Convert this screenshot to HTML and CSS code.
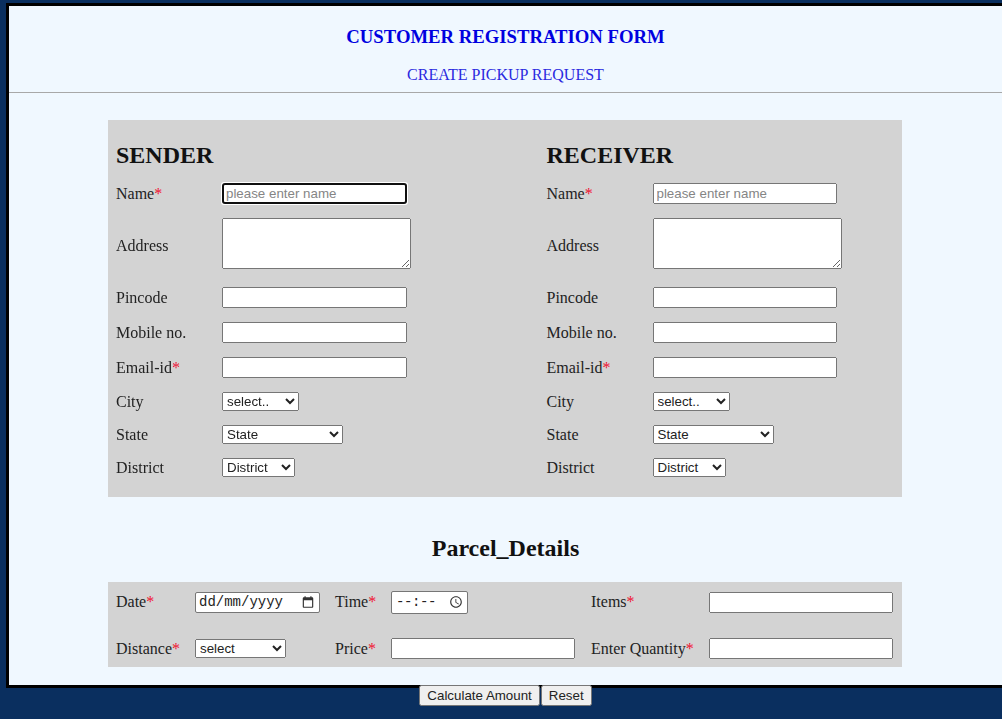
FILE: index.html
```html
<!DOCTYPE html>
<html lang="en">
<head>
    <meta charset="UTF-8">
    <meta name="viewport" content="width=device-width, initial-scale=1.0">
    <title>Customer Registration Form</title>
    <link rel="stylesheet" href="styles.css">
</head>
<body>

<form class="frame">
    <header class="page-head">
        <h3>CUSTOMER REGISTRATION FORM</h3>
        <p>CREATE PICKUP REQUEST</p>
    </header>
    <hr>

    <section class="panel parties">
        <div class="party">
            <h2>SENDER</h2>
            <label>Name<span class="req">*</span></label>
            <input class="text-in" type="text" placeholder="please enter name" autofocus>
            <label>Address</label>
            <textarea></textarea>
            <label>Pincode</label>
            <input class="text-in" type="text">
            <label>Mobile no.</label>
            <input class="text-in" type="text">
            <label>Email-id<span class="req">*</span></label>
            <input class="text-in" type="text">
            <label>City</label>
            <select class="city"><option>select..</option></select>
            <label>State</label>
            <select class="state"><option>State</option></select>
            <label>District</label>
            <select class="district"><option>District</option></select>
        </div>
        <div class="party">
            <h2>RECEIVER</h2>
            <label>Name<span class="req">*</span></label>
            <input class="text-in" type="text" placeholder="please enter name">
            <label>Address</label>
            <textarea></textarea>
            <label>Pincode</label>
            <input class="text-in" type="text">
            <label>Mobile no.</label>
            <input class="text-in" type="text">
            <label>Email-id<span class="req">*</span></label>
            <input class="text-in" type="text">
            <label>City</label>
            <select class="city"><option>select..</option></select>
            <label>State</label>
            <select class="state"><option>State</option></select>
            <label>District</label>
            <select class="district"><option>District</option></select>
        </div>
    </section>

    <h2 class="parcel-title">Parcel_Details</h2>

    <section class="panel parcel">
        <label>Date<span class="req">*</span></label>
        <div class="picker date-box">
            <input type="text" value="dd/mm/yyyy">
            <svg width="14" height="14" viewBox="0 0 24 24"><path d="M19 4h-1V2h-2v2H8V2H6v2H5c-1.100 0-2 .9-2 2v14c0 1.100.9 2 2 2h14c1.100 0 2-.9 2-2V6c0-1.100-.9-2-2-2zm0 16H5V9h14v11z"/></svg>
        </div>
        <label>Time<span class="req">*</span></label>
        <div class="picker time-box">
            <input type="text" value="--:--">
            <svg width="14" height="14" viewBox="0 0 24 24"><path d="M11.990 2C6.470 2 2 6.480 2 12s4.470 10 9.990 10C17.520 22 22 17.520 22 12S17.520 2 11.990 2zM12 20c-4.420 0-8-3.580-8-8s3.580-8 8-8 8 3.580 8 8-3.580 8-8 8zm.5-13H11v6l5.250 3.150.75-1.230-4.500-2.670z"/></svg>
        </div>
        <label>Items<span class="req">*</span></label>
        <input class="wide-in" type="text">

        <label>Distance<span class="req">*</span></label>
        <select class="distance"><option>select</option></select>
        <label>Price<span class="req">*</span></label>
        <input class="wide-in" type="text">
        <label>Enter Quantity<span class="req">*</span></label>
        <input class="wide-in" type="text">
    </section>

    <div class="actions">
        <button type="button">Calculate Amount</button><button type="reset">Reset</button>
    </div>
</form>

</body>
</html>
```

FILE: styles.css
```css
html, body {
    height: 100%;
}

body {
    margin: 0;
    overflow: hidden;
    background-color: #0a2f5f;
    font-family: "Liberation Serif", serif;
    font-size: 16px;
    color: #222;
}

.frame {
    box-sizing: border-box;
    height: 685px;
    margin: 3px 0 0 6px;
    background-color: #f0f8ff;
    border: 3px solid #000;
    border-right: none;
}

.page-head {
    padding-top: 20px;
    text-align: center;
}

.page-head h3 {
    margin: 0;
    font-size: 18.72px;
    line-height: 21px;
    color: #0000e0;
}

.page-head p {
    margin: 19px 0 0;
    line-height: 18px;
    color: #2a2ae0;
}

hr {
    margin: 8px 0 0;
    border: none;
    border-top: 1px solid #a8a8a8;
}

.panel {
    margin-left: 99px;
    width: 794px;
    box-sizing: border-box;
    background-color: #d3d3d3;
}

h2 {
    margin: 0;
    font-size: 24px;
    line-height: 27px;
    color: #111;
}

.parties {
    display: grid;
    grid-template-columns: 430.5px 1fr;
    margin-top: 27px;
    padding: 22px 8px 20px;
}

.party {
    display: grid;
    grid-template-columns: 106px 1fr;
    row-gap: 14px;
    align-items: center;
    justify-items: start;
}

.party h2 {
    grid-column: 1 / 3;
}

input, select, textarea, button {
    font-family: "Liberation Sans", sans-serif;
    font-size: 13.33px;
    color: #222;
}

input::placeholder {
    color: #858585;
}

.text-in {
    box-sizing: border-box;
    width: 184.6px;
    height: 21px;
}

textarea {
    box-sizing: border-box;
    width: 189px;
    height: 51px;
    margin: 0 0 4px;
}

select {
    box-sizing: border-box;
    height: 19px;
}

.city {
    width: 77px;
}

.state {
    width: 121px;
}

.district {
    width: 73px;
}

.distance {
    width: 91px;
}

.req {
    color: #f01030;
}

.parcel-title {
    margin: 38px 0 20px;
    text-align: center;
}

.parcel {
    display: grid;
    grid-template-columns: 79px 140px 56px 200px 118px 184px;
    grid-template-rows: 24px 21px;
    row-gap: 24px;
    align-items: center;
    justify-items: start;
    padding: 8px;
}

/* date and time boxes, drawn so the dd/mm/yyyy format does not depend on browser locale */
.picker {
    display: flex;
    align-items: center;
    box-sizing: border-box;
    padding: 0 4px 0 3px;
    background-color: #fff;
    border: 1px solid #767676;
    border-radius: 2px;
}

.picker input {
    flex: 1;
    min-width: 0;
    padding: 0;
    border: none;
    outline: none;
    background: none;
    font-family: "Liberation Mono", monospace;
    font-size: 14px;
}

.picker svg {
    fill: #333;
    flex-shrink: 0;
}

.date-box {
    width: 125px;
    height: 21px;
}

.time-box {
    width: 77px;
    height: 23px;
}

.time-box input {
    padding-left: 1px;
    letter-spacing: -0.4px;
}

.wide-in {
    box-sizing: border-box;
    width: 184px;
    height: 21px;
}

.actions {
    margin-top: 18px;
    text-align: center;
}

button {
    box-sizing: border-box;
    height: 21px;
}

button + button {
    margin-left: 1px;
}
```
